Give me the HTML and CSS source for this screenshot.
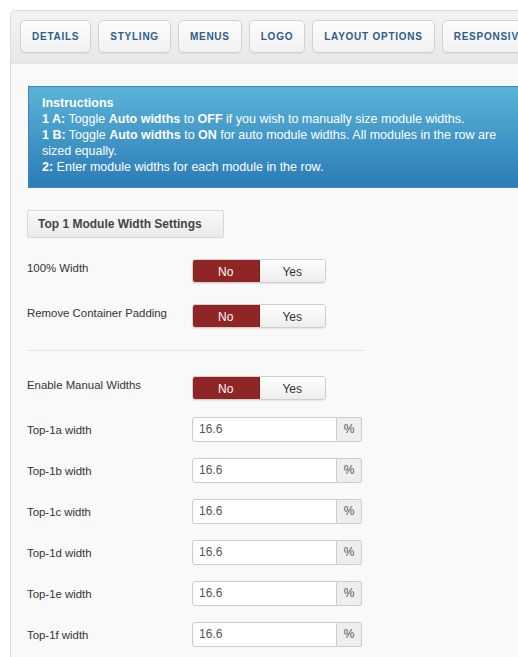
FILE: index.html
```html
<!DOCTYPE html>
<html>
<head>
<meta charset="utf-8">
<link rel="stylesheet" href="styles.css">
</head>
<body>
<div class="wrap">
  <div class="tabs">
    <span class="tab">DETAILS</span>
    <span class="tab">STYLING</span>
    <span class="tab">MENUS</span>
    <span class="tab">LOGO</span>
    <span class="tab">LAYOUT OPTIONS</span>
    <span class="tab">RESPONSIVE</span>
  </div>
  <div class="content">
    <div class="info">
      <div class="info-title">Instructions</div>
      <div><b>1 A:</b> Toggle <b>Auto widths</b> to <b>OFF</b> if you wish to manually size module widths.</div>
      <div><b>1 B:</b> Toggle <b>Auto widths</b> to <b>ON</b> for auto module widths. All modules in the row are<br>sized equally.</div>
      <div><b>2:</b> Enter module widths for each module in the row.</div>
    </div>
    <div class="section-btn">Top 1 Module Width Settings</div>

    <div class="row r-first">
      <div class="label">100% Width</div>
      <div class="toggle"><span class="opt on">No</span><span class="opt">Yes</span></div>
    </div>
    <div class="row">
      <div class="label">Remove Container Padding</div>
      <div class="toggle"><span class="opt on">No</span><span class="opt">Yes</span></div>
    </div>
    <hr class="sep">
    <div class="row r-after-sep">
      <div class="label">Enable Manual Widths</div>
      <div class="toggle"><span class="opt on">No</span><span class="opt">Yes</span></div>
    </div>
    <div class="row r-input r-input-first">
      <div class="label">Top-1a width</div>
      <div class="field"><span class="input">16.6</span><span class="addon">%</span></div>
    </div>
    <div class="row r-input">
      <div class="label">Top-1b width</div>
      <div class="field"><span class="input">16.6</span><span class="addon">%</span></div>
    </div>
    <div class="row r-input">
      <div class="label">Top-1c width</div>
      <div class="field"><span class="input">16.6</span><span class="addon">%</span></div>
    </div>
    <div class="row r-input">
      <div class="label">Top-1d width</div>
      <div class="field"><span class="input">16.6</span><span class="addon">%</span></div>
    </div>
    <div class="row r-input">
      <div class="label">Top-1e width</div>
      <div class="field"><span class="input">16.6</span><span class="addon">%</span></div>
    </div>
    <div class="row r-input">
      <div class="label">Top-1f width</div>
      <div class="field"><span class="input">16.6</span><span class="addon">%</span></div>
    </div>
  </div>
</div>
</body>
</html>
```

FILE: styles.css
```css
html, body {
  margin: 0;
  padding: 0;
  background: #ffffff;
  overflow: hidden;
}
body {
  font-family: "Liberation Sans", Arial, sans-serif;
  font-size: 11.4px;
  color: #333;
}
.wrap {
  margin: 10px 0 0 10px;
  border-left: 1px solid #dcdcdc;
  border-top: 1px solid #dcdcdc;
  border-top-left-radius: 6px;
  background: #f9f9f9;
  height: 700px;
  overflow: hidden;
}
.tabs {
  display: flex;
  gap: 7px;
  padding: 9px 0 0 9px;
  height: 43px;
  background: linear-gradient(#f3f3f3, #e8e8e8);
  border-bottom: 1px solid #e2e2e2;
  white-space: nowrap;
  border-top-left-radius: 5px;
}
.tab {
  flex: none;
  box-sizing: border-box;
  height: 33px;
  line-height: 31px;
  padding: 0 11px;
  border: 1px solid #d2d2d2;
  border-radius: 5px;
  background: linear-gradient(#fdfdfd, #f1f1f1);
  box-shadow: 0 1px 1px rgba(0,0,0,0.06);
  font-size: 10px;
  font-weight: bold;
  letter-spacing: 0.75px;
  color: #2e5d8c;
}
.content {
  padding: 22px 0 0 16px;
}
.info {
  width: 560px;
  box-sizing: border-box;
  margin-left: 1px;
  padding: 8px 13px 12px;
  background: linear-gradient(#5bb3d9, #2b7cb6);
  border: 1px solid #3a87bb;
  color: #fff;
  font-size: 12.5px;
  line-height: 16px;
}
.info-title {
  font-weight: bold;
}
.section-btn {
  margin-top: 22px;
  width: 197px;
  height: 28px;
  box-sizing: border-box;
  padding-left: 10px;
  line-height: 26px;
  border: 1px solid #d8d8d8;
  border-radius: 2px;
  background: linear-gradient(#f8f8f8, #ebebeb);
  font-weight: bold;
  color: #444;
  font-size: 12px;
}
.row {
  display: flex;
  align-items: flex-start;
  margin-top: 21px;
}
.row.r-first {
  margin-top: 21px;
}
.row.r-after-sep {
  margin-top: 25px;
}
.row.r-input {
  margin-top: 16px;
}
.row.r-input.r-input-first {
  margin-top: 17px;
}
.label {
  width: 165px;
  flex: none;
  line-height: 16px;
  padding-top: 1px;
  color: #333;
}
.r-input .label {
  padding-top: 5px;
}
.toggle {
  display: flex;
  width: 134px;
  height: 24px;
  box-sizing: border-box;
  border: 1px solid #cfcfcf;
  border-radius: 3px;
  overflow: hidden;
  box-shadow: 0 1px 1px rgba(0,0,0,0.08);
}
.opt {
  flex: 1;
  text-align: center;
  line-height: 23px;
  font-size: 12px;
  color: #333;
  background: linear-gradient(#ffffff, #ececec);
  padding-top: 1px;
}
.opt.on {
  background: #8f2525;
  color: #fff;
  border-right: 1px solid #7a1d1d;
}
.sep {
  border: 0;
  border-top: 1px solid #e6e6e6;
  width: 338px;
  margin: 22px 0 0 0;
  height: 0;
}
.field {
  display: flex;
  height: 25px;
}
.input {
  box-sizing: border-box;
  width: 145px;
  height: 25px;
  padding-left: 6px;
  line-height: 23px;
  border: 1px solid #cccccc;
  border-radius: 3px 0 0 3px;
  background: #fff;
  color: #555;
  font-size: 12px;
}
.addon {
  box-sizing: border-box;
  width: 25px;
  height: 25px;
  border: 1px solid #cccccc;
  border-left: 0;
  border-radius: 0 3px 3px 0;
  background: #eeeeee;
  text-align: center;
  line-height: 23px;
  color: #555;
  font-size: 12px;
}
```
